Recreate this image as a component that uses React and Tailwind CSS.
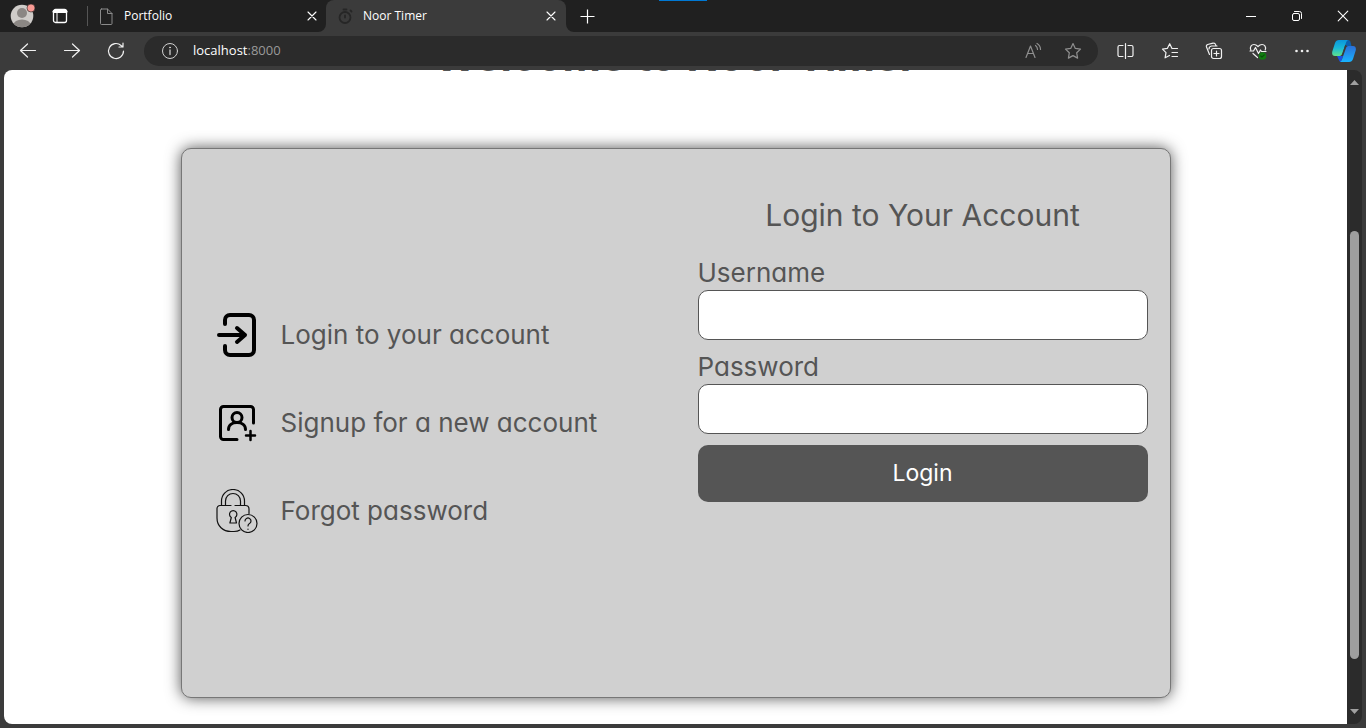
import React from 'react';

const line = {
  fill: 'none',
  stroke: 'currentColor',
  strokeWidth: 1,
  strokeLinecap: 'round',
  strokeLinejoin: 'round',
};

function Icon({ size = 20, children, ...rest }) {
  return (
    <svg width={size} height={size} viewBox={`0 0 ${size} ${size}`} aria-hidden="true" className="shrink-0" {...line} {...rest}>
      {children}
    </svg>
  );
}

const Close = () => (
  <Icon size={10} strokeWidth={1.1}>
    <path d="M1 1l8 8M9 1l-8 8" />
  </Icon>
);

function Tab({ title, icon, active }) {
  return (
    <div
      className={
        active
          ? 'relative flex h-8 w-60 items-center rounded-t-lg bg-[#3b3b3b] pl-[10px] pr-[10px]'
          : 'flex h-8 w-[238px] items-center pl-[9px] pr-[9px]'
      }
    >
      {active && (
        <>
          <svg className="absolute -left-2 bottom-0" width="8" height="8" aria-hidden="true">
            <path d="M8 0v8H0a8 8 0 0 0 8-8z" fill="#3b3b3b" />
          </svg>
          <svg className="absolute -right-2 bottom-0" width="8" height="8" aria-hidden="true">
            <path d="M0 0v8h8a8 8 0 0 1-8-8z" fill="#3b3b3b" />
          </svg>
        </>
      )}
      {icon}
      <span className="ml-2 flex-1 text-xs">{title}</span>
      <button aria-label={`Close ${title}`}>
        <Close />
      </button>
    </div>
  );
}

function ToolButton({ label, children }) {
  return (
    <button aria-label={label} className="flex h-9 w-11 shrink-0 items-center justify-center text-[#f0f0f0]">
      {children}
    </button>
  );
}

function TabStrip() {
  return (
    <header className="relative flex h-8 shrink-0 items-center bg-[#202020] pl-[10px]">
      <div className="absolute top-0 left-[659px] h-px w-12 bg-[#0078d4]" />
      <button aria-label="Profile" className="shrink-0">
        <svg width="26" height="26" viewBox="0 0 26 26" aria-hidden="true">
          <defs>
            <clipPath id="face">
              <circle cx="12" cy="13" r="11.3" />
            </clipPath>
          </defs>
          <circle cx="12" cy="13" r="11.3" fill="#cfccc9" />
          <g fill="#8b8784" clipPath="url(#face)">
            <circle cx="12" cy="10" r="5" />
            <ellipse cx="12" cy="22" rx="8.5" ry="5.5" />
          </g>
          <circle cx="21" cy="5" r="4" fill="#f99a94" stroke="#202020" strokeWidth=".6" />
        </svg>
      </button>
      <button aria-label="Tab actions" className="ml-4 shrink-0">
        <Icon size={16}>
          <rect x="1.5" y="1.5" width="13" height="13" rx="2" strokeWidth="1.3" />
          <path d="M2 3.5h12" strokeWidth="3" />
          <path d="M5 4v10" />
        </Icon>
      </button>
      <div className="ml-[19px] h-5 w-px shrink-0 bg-[#555]" />
      <Tab
        title="Portfolio"
        icon={
          <Icon size={19} stroke="#8a8a8a">
            <path d="M4.500 2h6l4.500 4.500v10a1 1 0 0 1-1 1H4.500a1 1 0 0 1-1-1V3a1 1 0 0 1 1-1zM10.500 2v4.500H15" />
          </Icon>
        }
      />
      <Tab
        active
        title="Noor Timer"
        icon={
          <Icon size={19} stroke="#262626" strokeWidth="1.800">
            <circle cx="9" cy="10.500" r="5.500" />
            <path d="M9 8.500v2M7.500 2.500h3M14.500 3.500l1 1" />
          </Icon>
        }
      />
      <button aria-label="New tab" className="ml-[14px] shrink-0">
        <Icon size={15} strokeWidth={1.2} strokeLinecap="butt">
          <path d="M7.500 .5v14M.5 7.500h14" />
        </Icon>
      </button>
      <div className="flex-1" />
      <button aria-label="Minimize" className="flex h-8 w-[46px] items-center justify-center">
        <Icon size={12}>
          <path d="M1 6.500h10" strokeLinecap="butt" />
        </Icon>
      </button>
      <button aria-label="Restore" className="flex h-8 w-[46px] items-center justify-center">
        <Icon size={12}>
          <rect x="1.500" y="3.500" width="7" height="7" rx="1.500" />
          <path d="M3.500 1.500h5a2 2 0 0 1 2 2v5" />
        </Icon>
      </button>
      <button aria-label="Close window" className="flex h-8 w-[46px] items-center justify-center">
        <Icon size={12} strokeWidth={1.100}>
          <path d="M1.200 1.200l9.600 9.600M10.800 1.200L1.200 10.800" />
        </Icon>
      </button>
    </header>
  );
}

const star = 'M10 2.500l2.300 4.900 5.200.7-3.800 3.700.9 5.300L10 14.600l-4.600 2.500.9-5.300-3.800-3.700 5.200-.7z';

function Toolbar() {
  return (
    <nav className="flex h-[38px] shrink-0 items-center bg-[#3b3b3b] pr-[2px] pl-[6px]">
      <ToolButton label="Back">
        <Icon strokeWidth={1.200}>
          <path d="M17.500 9.500H2.500M9.500 3L2.500 9.500l7 6.500" />
        </Icon>
      </ToolButton>
      <ToolButton label="Forward">
        <Icon strokeWidth={1.200}>
          <path d="M2.500 9.500h15M10.500 3l7 6.500-7 6.500" />
        </Icon>
      </ToolButton>
      <ToolButton label="Refresh">
        <Icon strokeWidth={1.200}>
          <path d="M17.500 10a7.500 7.500 0 1 1-2.400-5.500L17 6M17 2v4h-4" />
        </Icon>
      </ToolButton>
      <div className="mx-[6px] flex h-[30px] min-w-0 flex-1 items-center rounded-full bg-[#2b2b2b] pr-[3px] pl-4">
        <button aria-label="Site information">
          <Icon stroke="#d0d0d0">
            <circle cx="10" cy="10" r="7.500" />
            <path d="M10 9v4.500" strokeWidth="1.300" />
            <circle cx="10" cy="6.500" r=".5" fill="currentColor" />
          </Icon>
        </button>
        <div role="textbox" aria-label="Address" className="ml-[13px] flex-1 text-[13px] text-[#9a9a9a]">
          <span className="text-white">localhost</span>:8000
        </div>
        <button aria-label="Read aloud" className="flex h-[30px] w-9 items-center justify-center">
          <Icon stroke="#8f8f8f" strokeWidth={1.200}>
            <path d="M3 16.500L7.500 5l4.500 11.500M4.700 12.500h5.800M12.500 4.500a5 5 0 0 1 2 4M14 2.500a7 7 0 0 1 3.500 6" />
          </Icon>
        </button>
        <button aria-label="Add to favorites" className="flex h-[30px] w-11 items-center justify-center">
          <Icon stroke="#8f8f8f" strokeWidth={1.200}>
            <path d={star} />
          </Icon>
        </button>
      </div>
      <ToolButton label="Split screen">
        <Icon strokeWidth={1.200}>
          <path d="M9.500 2.500v15M7 4.500H3.500a1.500 1.500 0 0 0-1.500 1.500v8a1.500 1.500 0 0 0 1.500 1.500H7M12 4.500h3.500A1.500 1.500 0 0 1 17 6v8a1.500 1.500 0 0 1-1.500 1.500H12" />
        </Icon>
      </ToolButton>
      <ToolButton label="Favorites">
        <Icon strokeWidth={1.200}>
          <path d="M12 7.500L9.700 2.700 7.300 7.400l-4.800.7 3.500 3.600-.9 5.100 4.400-2.300M12 7.500h5.500M12 11.500h5.500M12 15.500h5.500" />
        </Icon>
      </ToolButton>
      <ToolButton label="Collections">
        <Icon strokeWidth={1.200}>
          <rect x="7.500" y="7.500" width="10" height="10" rx="2" />
          <path d="M12.500 10v5M10 12.500h5M5.500 13.500l-3-7.500a2 2 0 0 1 1.200-2.500L9 2.200A2 2 0 0 1 11.500 3.400l.7 1.600M5 8a3 3 0 0 1 2.500-3H13" />
        </Icon>
      </ToolButton>
      <ToolButton label="Browser essentials">
        <Icon strokeWidth={1.200}>
          <path d="M2.800 9C1.500 6 3.500 3.500 6 3.500c2 0 3 1 4 2 1-1 2-2 4-2 2.500 0 4.500 2.500 3.200 5.500M2 10h3.500l2-3.500 3 6 2-3.500 1 1.500H18M5 12.500l4.500 4" />
          <circle cx="14.500" cy="15" r="3.800" fill="#107c10" stroke="none" />
          <path d="M12.800 15l1.200 1.200 2.200-2.300" stroke="#0a4f0a" />
        </Icon>
      </ToolButton>
      <ToolButton label="Settings and more">
        <Icon fill="currentColor" stroke="none">
          <circle cx="4.500" cy="10" r="1.300" />
          <circle cx="10" cy="10" r="1.300" />
          <circle cx="15.500" cy="10" r="1.300" />
        </Icon>
      </ToolButton>
      <button aria-label="Copilot" className="flex w-10 shrink-0 justify-center">
        <svg width="24" height="24" viewBox="0 0 24 24" aria-hidden="true">
          <defs>
            <linearGradient id="pilotA" x1="0" y1="0" x2="0" y2="1">
              <stop offset="0" stopColor="#0a96dc" />
              <stop offset=".5" stopColor="#19b8d8" />
              <stop offset="1" stopColor="#5fe08b" />
            </linearGradient>
            <linearGradient id="pilotB" x1="0" y1="0" x2="0" y2="1">
              <stop offset="0" stopColor="#2b6fd8" />
              <stop offset="1" stopColor="#18b4ff" />
            </linearGradient>
          </defs>
          <path d="M13 1h3c2 0 2.500 2 3 4l.5 2h-6.500z" fill="#0b5fae" />
          <path d="M5 17h6l-2 6c-1.500 0-2-1.500-2.500-3z" fill="#1b50e0" />
          <path d="M7 1h9c-1.500 1-2 2.500-2.500 4L10 15c-.5 1.500-1.500 2-3 2H3c-2.500 0-3.300-2-2.700-4.500L3 4c.7-2 2-3 4-3z" fill="url(#pilotA)" />
          <path d="M17 23H8c1.500-1 2-2.500 2.500-4l3.500-10c.5-1.500 1.500-2 3-2H21c2.500 0 3.300 2 2.700 4.500L21 20c-.7 2-2 3-4 3z" fill="url(#pilotB)" />
          <path d="M13.200 6h1.600c-1 1-1.300 2-1.700 3l-2.600 8H9.300c.7-.7 1-1.500 1.200-2z" fill="#3b3b3b" />
        </svg>
      </button>
    </nav>
  );
}

function Scrollbar() {
  return (
    <div className="flex w-[15px] shrink-0 flex-col items-center rounded-r-lg bg-[#2b2b2b] py-[9px]" aria-hidden="true">
      <svg width="9" height="6" className="shrink-0">
        <path d="M4.500 1L9 6H0z" fill="#a0a0a0" />
      </svg>
      <div className="flex-[146]" />
      <div className="w-[9px] flex-[428] rounded-full bg-[#9e9e9e]" />
      <div className="flex-[50]" />
      <svg width="9" height="6" className="shrink-0">
        <path d="M0 0h9L4.500 5z" fill="#a0a0a0" />
      </svg>
    </div>
  );
}

const LoginIcon = () => (
  <svg width="44" height="44" viewBox="0 0 44 44" fill="none" stroke="#000" strokeWidth="4" strokeLinecap="round" strokeLinejoin="round" aria-hidden="true">
    <path d="M9 11V7a5 5 0 0 1 5-5h19a5 5 0 0 1 5 5v30a5 5 0 0 1-5 5H14a5 5 0 0 1-5-5v-4" />
    <path d="M3 22h26M21 15l8 7-8 7" />
  </svg>
);

const SignupIcon = () => (
  <svg width="44" height="44" viewBox="0 0 44 44" fill="none" stroke="#000" strokeWidth="3" strokeLinecap="round" strokeLinejoin="round" aria-hidden="true">
    <path d="M37.500 22V8.500a3 3 0 0 0-3-3h-27a3 3 0 0 0-3 3v27a3 3 0 0 0 3 3H21" />
    <circle cx="21" cy="16.500" r="5" />
    <path d="M12.500 28.500c0-4.500 3.500-7 8.500-7s8.500 2.500 8.500 7" />
    <path d="M34.500 30v9M30 34.500h9" strokeWidth="2.500" />
  </svg>
);

const ForgotIcon = () => (
  <svg width="44" height="44" viewBox="0 0 44 44" fill="none" stroke="#111" strokeWidth="1.200" strokeLinecap="round" strokeLinejoin="round" aria-hidden="true">
    <path d="M5.500 16V12a11.500 11.500 0 0 1 23 0V16M9.500 16v-4a7.500 7.500 0 0 1 15 0V16" />
    <path d="M15 16.500H4a3 3 0 0 0-3 3V29c0 8 6 13.500 14 13.500h3c2.500 0 4.500-.5 6-1.500M19 16.500h10.500a3.500 3.500 0 0 1 3.500 3.500v4.500" />
    <path d="M15.300 28.500a3.700 3.700 0 1 1 3.800 0l1.400 5.500h-6.600z" />
    <circle cx="32" cy="34.500" r="9" />
    <path d="M29 32a3 3 0 1 1 4.500 2.600c-1 .6-1.500 1.200-1.500 2.400M32 40v.3" />
  </svg>
);

const options = [
  ['Login to your account', LoginIcon],
  ['Signup for a new account', SignupIcon],
  ['Forgot password', ForgotIcon],
];

function Field({ id, label, type }) {
  return (
    <div className="flex flex-col">
      <label htmlFor={id} className="text-[26px] leading-[34px]">
        {label}
      </label>
      <input id={id} type={type} className="h-[50px] w-full rounded-[10px] border border-[#555] bg-white px-3 text-xl outline-none" />
    </div>
  );
}

export default function App() {
  return (
    <div className="flex h-screen flex-col overflow-hidden bg-[#3b3b3b] font-['Open_Sans',sans-serif] text-white">
      <TabStrip />
      <Toolbar />
      <div className="flex min-h-0 flex-1 px-1 pb-1">
        <main className="min-w-0 flex-1 overflow-hidden rounded-l-lg bg-white font-['Inter',sans-serif] text-[#555] [font-feature-settings:'cv11']">
          <h1 className="-mt-[38px] text-center text-[42px] leading-[48px] font-bold">Welcome to Noor Timer</h1>
          <section className="mx-auto mt-[68px] flex min-h-[550px] w-full max-w-[990px] rounded-[10px] border border-[#777] bg-[#d0d0d0] shadow-[0_0_15px_#555]">
            <ul className="flex flex-1 flex-col justify-center gap-11 pl-[34px]">
              {options.map(([text, Glyph]) => (
                <li key={text}>
                  <a href="#" className="flex h-11 items-center gap-[21px] text-[26px] leading-[34px]">
                    <Glyph />
                    {text}
                  </a>
                </li>
              ))}
            </ul>
            <form className="flex w-[472px] flex-col gap-[10px] pt-[41px] pr-[22px]" onSubmit={(e) => e.preventDefault()}>
              <h2 className="mb-[6px] text-center text-[30px] leading-[50px]">Login to Your Account</h2>
              <Field id="username" label="Username" type="text" />
              <Field id="password" label="Password" type="password" />
              <button className="mt-px h-[57px] rounded-[10px] bg-[#555] text-[23px] text-white">Login</button>
            </form>
          </section>
        </main>
        <Scrollbar />
      </div>
    </div>
  );
}
